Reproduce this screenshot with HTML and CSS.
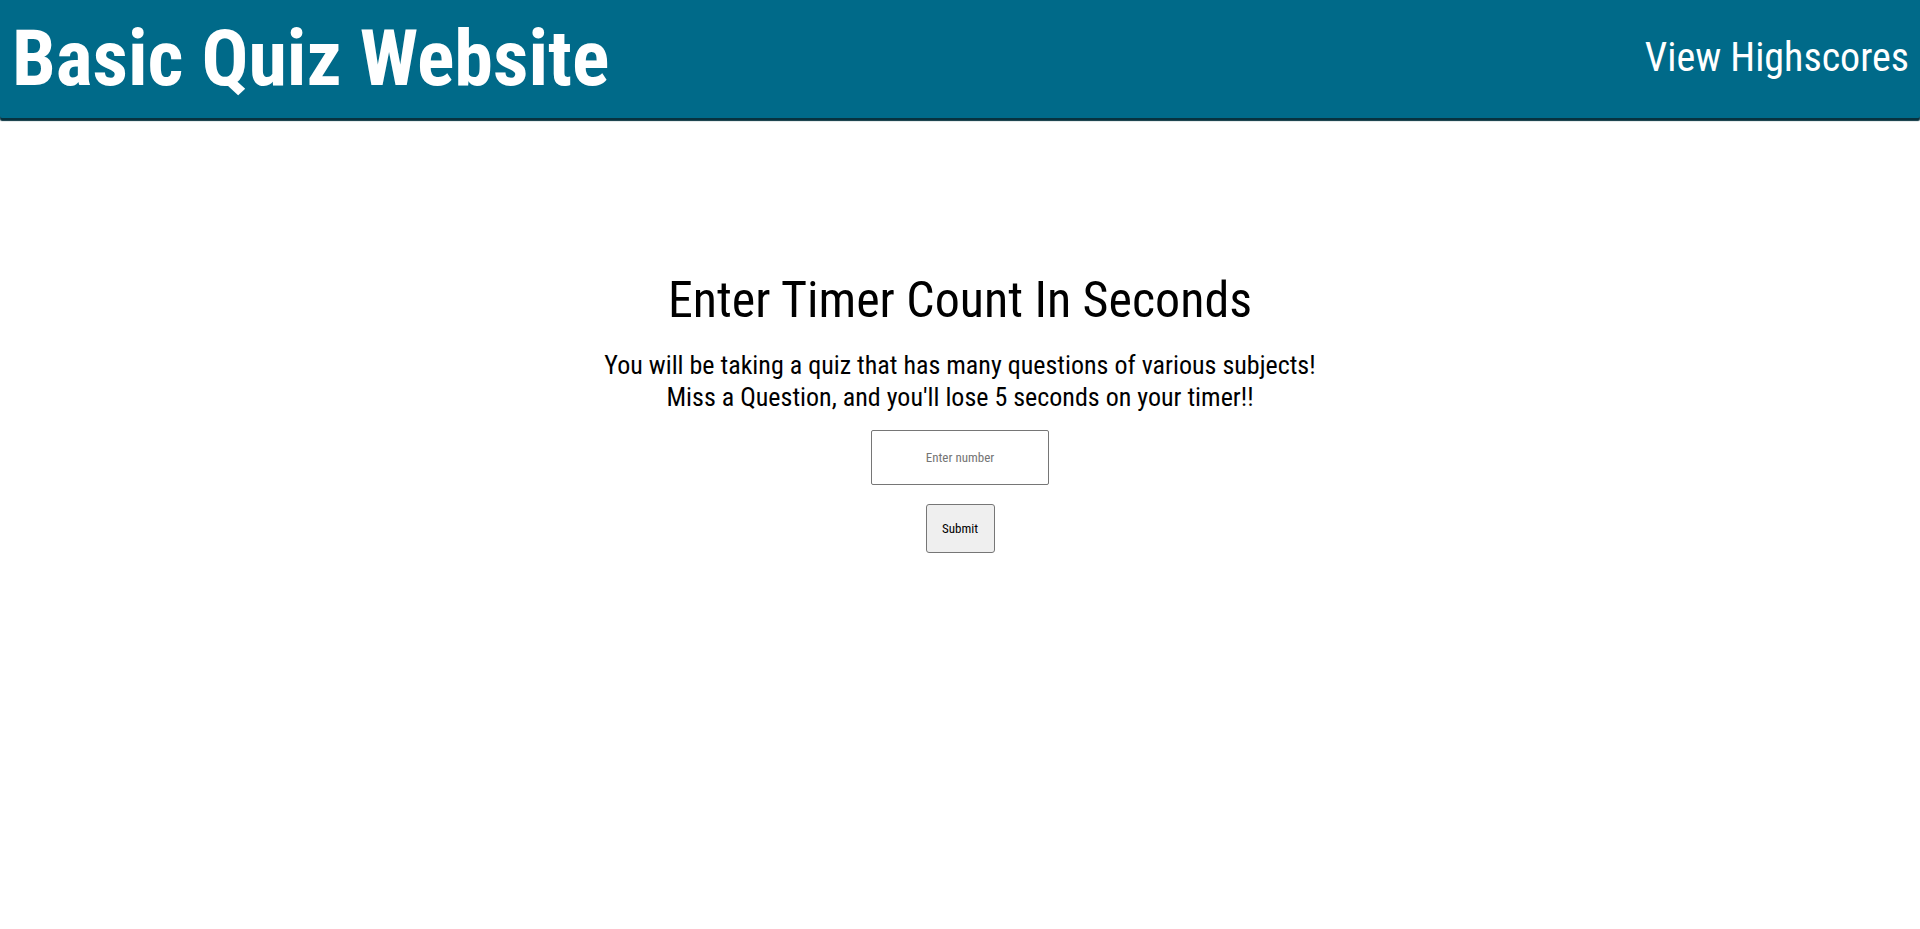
FILE: index.html
```html
<!DOCTYPE html>
<html lang="en">
<head>
<meta charset="utf-8">
<title>Basic Quiz Website</title>
<link rel="stylesheet" href="styles.css">
</head>
<body>
<header class="site-header">
  <h1 class="site-title">Basic Quiz Website</h1>
  <a class="highscores-link" href="#">View Highscores</a>
</header>
<main class="content">
  <section class="timer-card">
    <h2 class="timer-heading">Enter Timer Count In Seconds</h2>
    <p class="timer-text">You will be taking a quiz that has many questions of various subjects!<br>Miss a Question, and you'll lose 5 seconds on your timer!!</p>
    <input class="timer-input" type="number" placeholder="Enter number">
    <button class="submit-btn" type="button">Submit</button>
  </section>
</main>
</body>
</html>
```

FILE: styles.css
```css
html, body {
  margin: 0;
  padding: 0;
  background: #ffffff;
}

body {
  font-family: "Roboto Condensed", Roboto, "Liberation Sans", sans-serif;
  font-stretch: 75%;
  color: #000;
}

.site-header {
  height: 118px;
  background: #006a89;
  box-shadow: 0 3px 1px #07323f;
  border-bottom-left-radius: 2px;
  border-bottom-right-radius: 2px;
  display: flex;
  align-items: center;
  justify-content: space-between;
  padding: 0 11px 0 12px;
}

.site-title {
  margin: 0;
  color: #fff;
  font-size: 78px;
  font-weight: 700;
  line-height: 1;
  letter-spacing: 0;
}

.highscores-link {
  color: #fff;
  text-decoration: none;
  font-size: 40px;
  font-weight: 400;
  margin-top: -3px;
}

.content {
  display: flex;
  justify-content: center;
  padding-top: 152px;
}

.timer-card {
  display: flex;
  flex-direction: column;
  align-items: center;
}

.timer-heading {
  margin: 0;
  font-size: 50px;
  font-weight: 400;
  line-height: 1.2;
}

.timer-text {
  margin: 19px 0 17px;
  font-size: 26px;
  line-height: 32px;
  text-align: center;
}

.timer-input {
  box-sizing: border-box;
  width: 178px;
  height: 55px;
  border: 1px solid #767676;
  border-radius: 2px;
  font-family: inherit;
  font-size: 13px;
  text-align: center;
  padding: 0;
  -moz-appearance: textfield;
}

.timer-input::-webkit-outer-spin-button,
.timer-input::-webkit-inner-spin-button {
  -webkit-appearance: none;
  margin: 0;
}

.timer-input::placeholder {
  color: #757575;
}

.submit-btn {
  box-sizing: border-box;
  margin-top: 19px;
  width: 69px;
  height: 49px;
  background: #efefef;
  border: 1px solid #767676;
  border-radius: 3px;
  font-family: inherit;
  font-size: 13px;
  color: #000;
  padding: 0;
}
```
